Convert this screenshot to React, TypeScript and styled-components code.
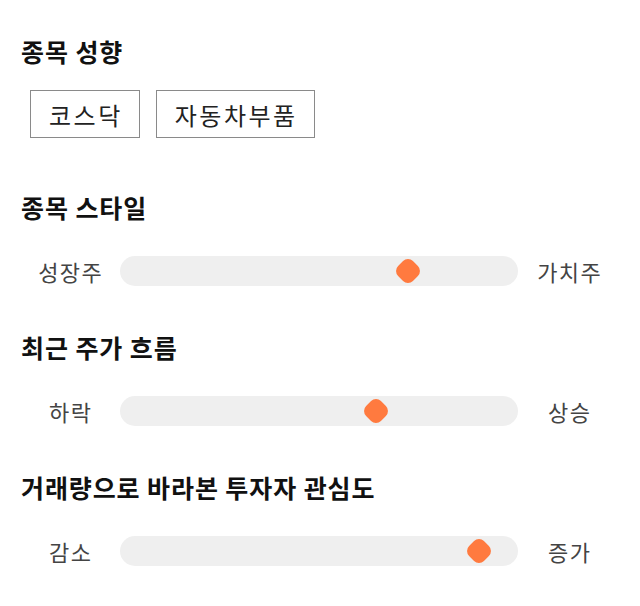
import React from "react";
import styled, { createGlobalStyle } from "styled-components";

const Global = createGlobalStyle`
  html, body { margin: 0; padding: 0; background: #fff; }
  body { font-family: "Noto Sans CJK KR", "Noto Sans", sans-serif; }
`;

const Page = styled.div`
  width: 640px;
  padding: 33px 20px 0 20px;
  box-sizing: border-box;
  display: flex;
  flex-direction: column;
`;

const Title = styled.h2`
  margin: 0 0 0 1px;
  font-size: 25px;
  line-height: 36px;
  font-weight: 700;
  color: #111;
  letter-spacing: 0.9px;
`;

const Section = styled.section<{ $gap: number; $after: number }>`
  display: flex;
  flex-direction: column;
  gap: ${(p) => p.$gap}px;
  margin-bottom: ${(p) => p.$after}px;
`;

const Tags = styled.div`
  display: flex;
  gap: 16px;
  padding-left: 10px;
`;

const Tag = styled.div`
  height: 48px;
  box-sizing: border-box;
  padding: 0 16px 0 18px;
  border: 1px solid #8a8a8a;
  display: flex;
  align-items: center;
  justify-content: center;
  font-size: 24px;
  letter-spacing: 2.5px;
  color: #222;
`;

const SliderRow = styled.div`
  display: grid;
  grid-template-columns: 100px 1fr 102px;
  align-items: center;
  height: 40px;
`;

const SideLabel = styled.span`
  text-align: center;
  font-size: 22px;
  letter-spacing: 1.5px;
  text-indent: 1.5px;
  color: #444;
`;

const Track = styled.div`
  position: relative;
  height: 30px;
  border-radius: 15px;
  background: #efefef;
`;

const Thumb = styled.div`
  position: absolute;
  top: 50%;
  width: 21px;
  height: 21px;
  border-radius: 7px;
  background: #ff7a3f;
  transform: translate(-50%, -50%) rotate(45deg);
`;

type SliderProps = { left: string; right: string; pct: number };

const Slider = ({ left, right, pct }: SliderProps) => (
  <SliderRow>
    <SideLabel>{left}</SideLabel>
    <Track>
      <Thumb style={{ left: `${pct}%` }} />
    </Track>
    <SideLabel>{right}</SideLabel>
  </SliderRow>
);

export default function App() {
  return (
    <>
      <Global />
      <Page>
        <Section $gap={21} $after={51}>
          <Title>종목 성향</Title>
          <Tags>
            <Tag>코스닥</Tag>
            <Tag>자동차부품</Tag>
          </Tags>
        </Section>
        <Section $gap={26} $after={38}>
          <Title>종목 스타일</Title>
          <Slider left="성장주" right="가치주" pct={72.4} />
        </Section>
        <Section $gap={26} $after={38}>
          <Title>최근 주가 흐름</Title>
          <Slider left="하락" right="상승" pct={64.3} />
        </Section>
        <Section $gap={26} $after={0}>
          <Title>거래량으로 바라본 투자자 관심도</Title>
          <Slider left="감소" right="증가" pct={90.2} />
        </Section>
      </Page>
    </>
  );
}
